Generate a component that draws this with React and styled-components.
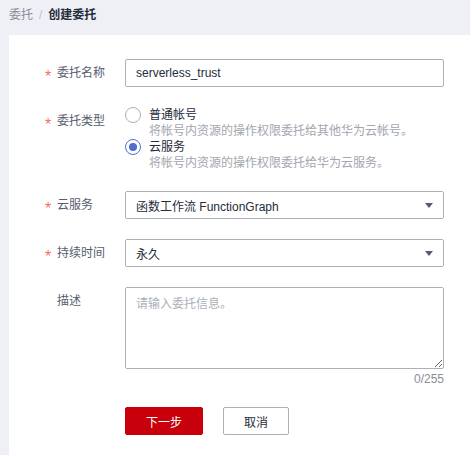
import React from "react";
import styled, { createGlobalStyle } from "styled-components";

const GlobalStyle = createGlobalStyle`
  html, body {
    margin: 0;
    padding: 0;
    background: #eef0f5;
  }
  body {
    font-family: "Liberation Sans", "Noto Sans CJK SC", sans-serif;
    font-size: 12px;
    color: #252b3a;
  }
  * { box-sizing: border-box; }
`;

const Page = styled.div`
  display: flex;
  flex-direction: column;
  min-height: 100vh;
  background: #eef0f5;
`;

const Breadcrumb = styled.div`
  display: flex;
  align-items: center;
  height: 35px;
  padding: 0 0 5px 9px;
  line-height: 16px;
`;

const Crumb = styled.span`
  color: ${(p) => (p.$current ? "#252b3a" : "#8a8e99")};
  font-weight: ${(p) => (p.$current ? "bold" : "normal")};
`;

const Sep = styled.span`
  color: #c0c3cb;
  margin: 0 6px;
`;

const Card = styled.div`
  flex: 1;
  margin-left: 9px;
  background: #fff;
  padding: 24px 0 0 36px;
`;

const Form = styled.div`
  display: grid;
  grid-template-columns: 80px 319px;
  row-gap: 20px;
`;

const Label = styled.div`
  display: flex;
  align-items: flex-start;
  height: 28px;
  line-height: 28px;
  color: #575d6c;
`;

/* required-field marker, nudged down so the asterisk sits at text mid-height */
const Star = styled.span`
  flex: none;
  width: 12px;
  padding-top: 4px;
  font-size: 16px;
  line-height: 28px;
  color: #f66f6a;
`;

const TextInput = styled.input`
  width: 100%;
  height: 28px;
  border: 1px solid #adb0b8;
  border-radius: 2px;
  padding: 0 10px;
  font: inherit;
  font-size: 12px;
  color: #252b3a;
  outline: none;
  background: #fff;
`;

const RadioGroup = styled.div`
  display: flex;
  flex-direction: column;
`;

const RadioLine = styled.label`
  display: flex;
  align-items: center;
  gap: 8px;
  height: 16px;
  line-height: 16px;
  color: #252b3a;
`;

const RadioDot = styled.span`
  flex: none;
  width: 16px;
  height: 16px;
  border-radius: 50%;
  border: 1px solid ${(p) => (p.$checked ? "#526ecc" : "#adb0b8")};
  display: flex;
  align-items: center;
  justify-content: center;
  background: #fff;

  &::after {
    content: "";
    width: 8px;
    height: 8px;
    border-radius: 50%;
    background: ${(p) => (p.$checked ? "#526ecc" : "transparent")};
  }
`;

const RadioHint = styled.div`
  padding-left: 24px;
  height: 16px;
  line-height: 16px;
  color: #a3a6ae;
  white-space: nowrap;
`;

const SelectBox = styled.div`
  display: flex;
  align-items: center;
  justify-content: space-between;
  height: 28px;
  border: 1px solid #adb0b8;
  border-radius: 2px;
  padding: 0 10px;
  color: #252b3a;
  background: #fff;
`;

const Caret = styled.svg`
  width: 8px;
  height: 5px;
  fill: #575d6c;
`;

const AreaField = styled.div`
  display: flex;
  flex-direction: column;
`;

const TextArea = styled.textarea`
  width: 100%;
  height: 82px;
  border: 1px solid #adb0b8;
  border-radius: 2px;
  padding: 7px 10px;
  font: inherit;
  font-size: 12px;
  line-height: 18px;
  color: #252b3a;
  resize: vertical;
  outline: none;
  display: block;

  &::placeholder {
    color: #adb0b8;
  }
`;

const Counter = styled.div`
  margin-top: 2px;
  height: 16px;
  line-height: 16px;
  text-align: right;
  color: #8a8e99;
`;

const Actions = styled.div`
  display: flex;
  gap: 20px;
`;

const Button = styled.button`
  height: 28px;
  width: ${(p) => p.$width}px;
  border-radius: 2px;
  font: inherit;
  font-size: 12px;
  cursor: pointer;
  border: 1px solid ${(p) => (p.$primary ? "#c7000b" : "#adb0b8")};
  background: ${(p) => (p.$primary ? "#c7000b" : "#fff")};
  color: ${(p) => (p.$primary ? "#fff" : "#252b3a")};
`;

function Select({ value }) {
  return (
    <SelectBox>
      <span>{value}</span>
      <Caret viewBox="0 0 8 5">
        <path d="M0 0 H8 L4 5 Z" />
      </Caret>
    </SelectBox>
  );
}

function FieldLabel({ required, children }) {
  return (
    <Label>
      <Star>{required ? "*" : ""}</Star>
      {children}
    </Label>
  );
}

export default function App() {
  return (
    <>
      <GlobalStyle />
      <Page>
        <Breadcrumb>
          <Crumb>委托</Crumb>
          <Sep>/</Sep>
          <Crumb $current>创建委托</Crumb>
        </Breadcrumb>
        <Card>
          <Form>
            <FieldLabel required>委托名称</FieldLabel>
            <TextInput defaultValue="serverless_trust" />

            <FieldLabel required>委托类型</FieldLabel>
            <RadioGroup>
              <RadioLine>
                <RadioDot />
                普通帐号
              </RadioLine>
              <RadioHint>将帐号内资源的操作权限委托给其他华为云帐号。</RadioHint>
              <RadioLine>
                <RadioDot $checked />
                云服务
              </RadioLine>
              <RadioHint>将帐号内资源的操作权限委托给华为云服务。</RadioHint>
            </RadioGroup>

            <FieldLabel required>云服务</FieldLabel>
            <Select value="函数工作流 FunctionGraph" />

            <FieldLabel required>持续时间</FieldLabel>
            <Select value="永久" />

            <FieldLabel>描述</FieldLabel>
            <AreaField>
              <TextArea placeholder="请输入委托信息。" />
              <Counter>0/255</Counter>
            </AreaField>

            <span />
            <Actions>
              <Button $primary $width={78}>下一步</Button>
              <Button $width={66}>取消</Button>
            </Actions>
          </Form>
        </Card>
      </Page>
    </>
  );
}
